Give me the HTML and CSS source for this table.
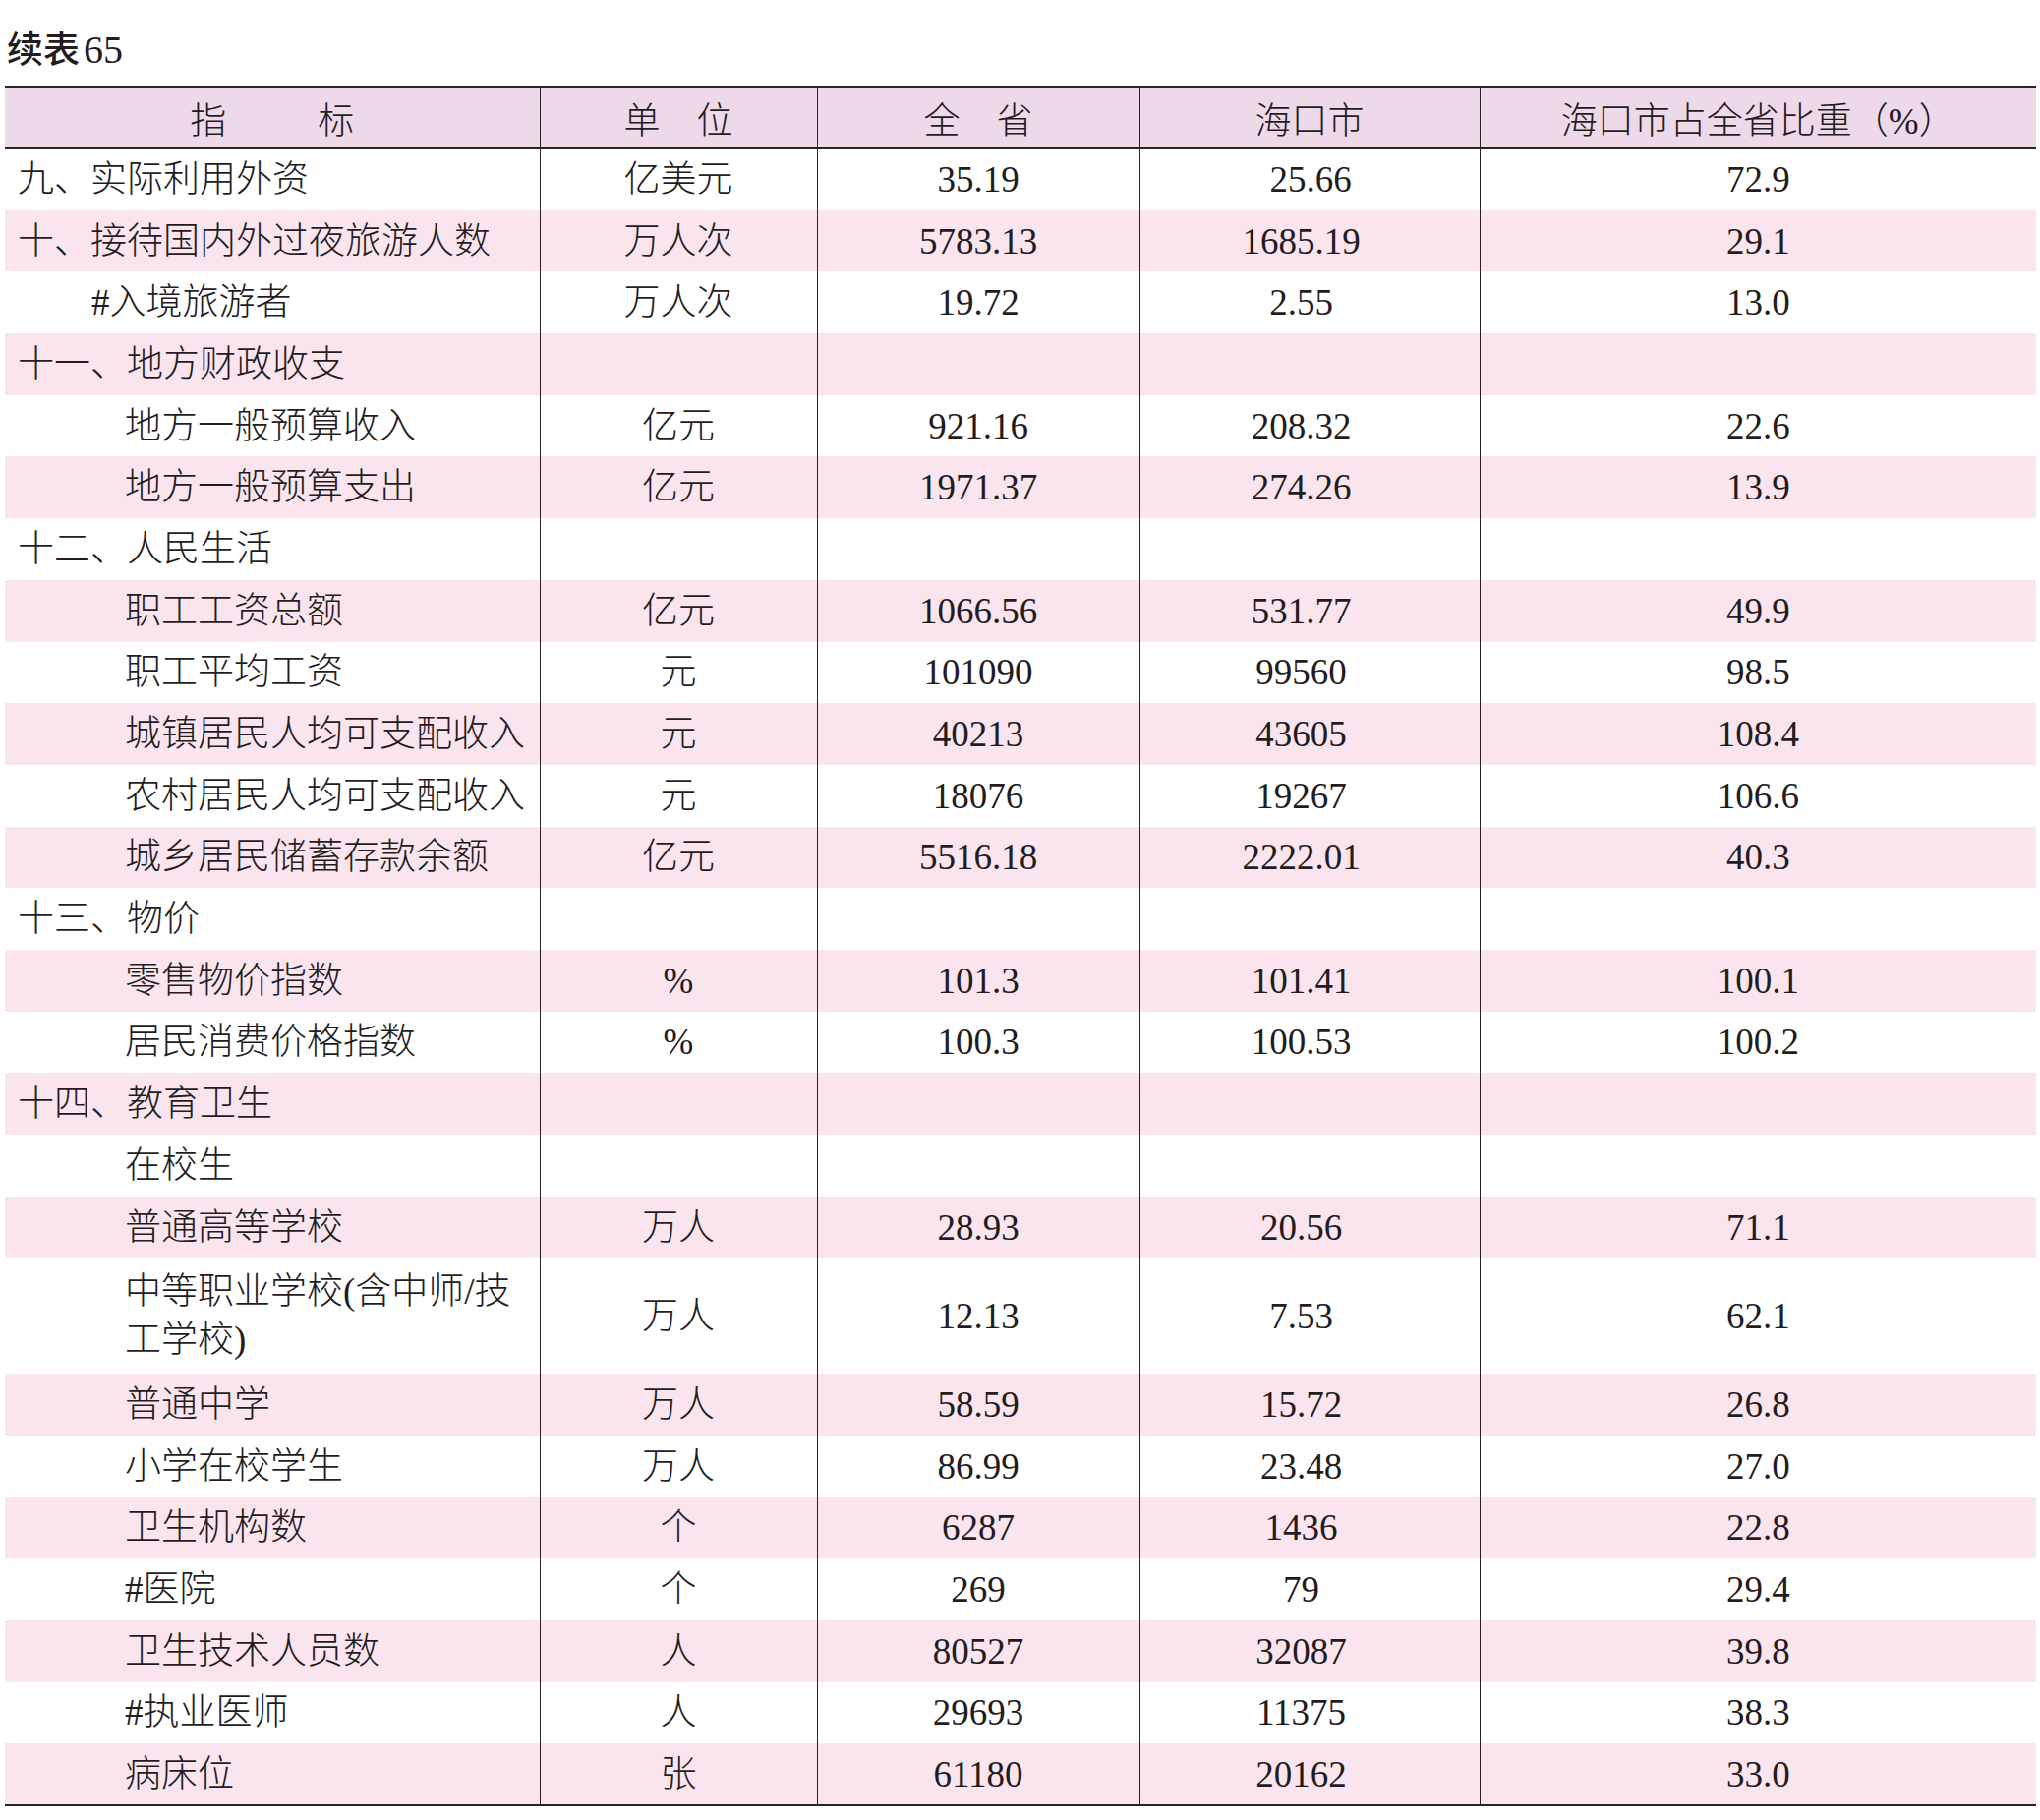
FILE: index.html
```html
<!DOCTYPE html>
<html lang="zh-CN">
<head>
<meta charset="utf-8">
<title>续表65</title>
<link rel="stylesheet" href="styles.css">
</head>
<body>
<div class="page">
  <div class="title"><span class="title-cn">续表</span><span class="title-num">65</span></div>
  <table class="stat">
    <colgroup>
      <col class="c1"><col class="c2"><col class="c3"><col class="c4"><col class="c5">
    </colgroup>
    <thead>
      <tr>
        <th>指<i class="gap"></i>标</th>
        <th>单　位</th>
        <th>全　省</th>
        <th>海口市</th>
        <th>海口市占全省比重（%）</th>
      </tr>
    </thead>
    <tbody>
      <tr><td class="l0">九、实际利用外资</td><td>亿美元</td><td>35.19</td><td class="nudge">25.66</td><td>72.9</td></tr>
      <tr><td class="l0">十、接待国内外过夜旅游人数</td><td>万人次</td><td>5783.13</td><td>1685.19</td><td>29.1</td></tr>
      <tr><td class="l1">#入境旅游者</td><td>万人次</td><td>19.72</td><td>2.55</td><td>13.0</td></tr>
      <tr><td class="l0">十一、地方财政收支</td><td></td><td></td><td></td><td></td></tr>
      <tr><td class="l2">地方一般预算收入</td><td>亿元</td><td>921.16</td><td>208.32</td><td>22.6</td></tr>
      <tr><td class="l2">地方一般预算支出</td><td>亿元</td><td>1971.37</td><td>274.26</td><td>13.9</td></tr>
      <tr><td class="l0">十二、人民生活</td><td></td><td></td><td></td><td></td></tr>
      <tr><td class="l2">职工工资总额</td><td>亿元</td><td>1066.56</td><td>531.77</td><td>49.9</td></tr>
      <tr><td class="l2">职工平均工资</td><td>元</td><td>101090</td><td>99560</td><td>98.5</td></tr>
      <tr><td class="l2">城镇居民人均可支配收入</td><td>元</td><td>40213</td><td>43605</td><td>108.4</td></tr>
      <tr><td class="l2">农村居民人均可支配收入</td><td>元</td><td>18076</td><td>19267</td><td>106.6</td></tr>
      <tr><td class="l2">城乡居民储蓄存款余额</td><td>亿元</td><td>5516.18</td><td>2222.01</td><td>40.3</td></tr>
      <tr><td class="l0">十三、物价</td><td></td><td></td><td></td><td></td></tr>
      <tr><td class="l2">零售物价指数</td><td>%</td><td>101.3</td><td>101.41</td><td>100.1</td></tr>
      <tr><td class="l2">居民消费价格指数</td><td>%</td><td>100.3</td><td>100.53</td><td>100.2</td></tr>
      <tr><td class="l0">十四、教育卫生</td><td></td><td></td><td></td><td></td></tr>
      <tr><td class="l2">在校生</td><td></td><td></td><td></td><td></td></tr>
      <tr><td class="l2">普通高等学校</td><td>万人</td><td>28.93</td><td>20.56</td><td>71.1</td></tr>
      <tr class="double"><td class="l2">中等职业学校(含中师/技<br>工学校)</td><td>万人</td><td>12.13</td><td>7.53</td><td>62.1</td></tr>
      <tr><td class="l2">普通中学</td><td>万人</td><td>58.59</td><td>15.72</td><td>26.8</td></tr>
      <tr><td class="l2">小学在校学生</td><td>万人</td><td>86.99</td><td>23.48</td><td>27.0</td></tr>
      <tr><td class="l2">卫生机构数</td><td>个</td><td>6287</td><td>1436</td><td>22.8</td></tr>
      <tr><td class="l2">#医院</td><td>个</td><td>269</td><td>79</td><td>29.4</td></tr>
      <tr><td class="l2">卫生技术人员数</td><td>人</td><td>80527</td><td>32087</td><td>39.8</td></tr>
      <tr><td class="l2">#执业医师</td><td>人</td><td>29693</td><td>11375</td><td>38.3</td></tr>
      <tr><td class="l2">病床位</td><td>张</td><td>61180</td><td>20162</td><td>33.0</td></tr>
    </tbody>
  </table>
</div>
</body>
</html>
```
FILE: styles.css
```css
html, body {
  margin: 0;
  padding: 0;
  background: #ffffff;
}

body {
  font-family: "Liberation Serif", "Noto Sans CJK SC", serif;
  color: #231c1e;
}

.page {
  padding: 0 4px 0 5px;
}

.title {
  height: 87px;
  box-sizing: border-box;
  padding-top: 27px;
  padding-left: 2px;
  line-height: 42px;
}

.title-cn {
  font-family: "Noto Sans CJK SC", sans-serif;
  font-weight: 500;
  font-size: 37px;
}

.title-num {
  font-size: 40px;
  margin-left: 4px;
}

.stat {
  width: 2066px;
  border-collapse: collapse;
  table-layout: fixed;
  font-size: 37px;
  font-weight: 300;
}

.c1 { width: 544px; }
.c2 { width: 282px; }
.c3 { width: 328px; }
.c4 { width: 346px; }
.c5 { width: 566px; }

.stat th {
  height: 61px;
  padding: 0;
  background: #eed9e9;
  font-weight: 300;
  text-align: center;
  vertical-align: middle;
  border-top: 2px solid #2a2224;
  border-bottom: 2.5px solid #2a2224;
}

.stat th + th,
.stat td + td {
  border-left: 1.5px solid #2a2224;
}

.gap {
  display: inline-block;
  width: 93px;
}

.stat tbody tr {
  height: 62.7px;
}

.stat tbody tr.double {
  height: 117.8px;
}

.stat tbody tr:nth-child(even) {
  background: #fae4ee;
}

.stat tbody tr:last-child td {
  border-bottom: 2px solid #2a2224;
}

.stat td {
  padding: 0;
  text-align: center;
  vertical-align: middle;
  white-space: nowrap;
  line-height: 49px;
}

.stat td:nth-child(4) {
  padding-right: 17px;
}

.stat td.nudge {
  padding-right: 0;
  padding-left: 2px;
}

.stat td.l0 {
  text-align: left;
  padding-left: 13px;
}

.stat td.l1 {
  text-align: left;
  padding-left: 88px;
}

.stat td.l2 {
  text-align: left;
  padding-left: 122px;
}
```
